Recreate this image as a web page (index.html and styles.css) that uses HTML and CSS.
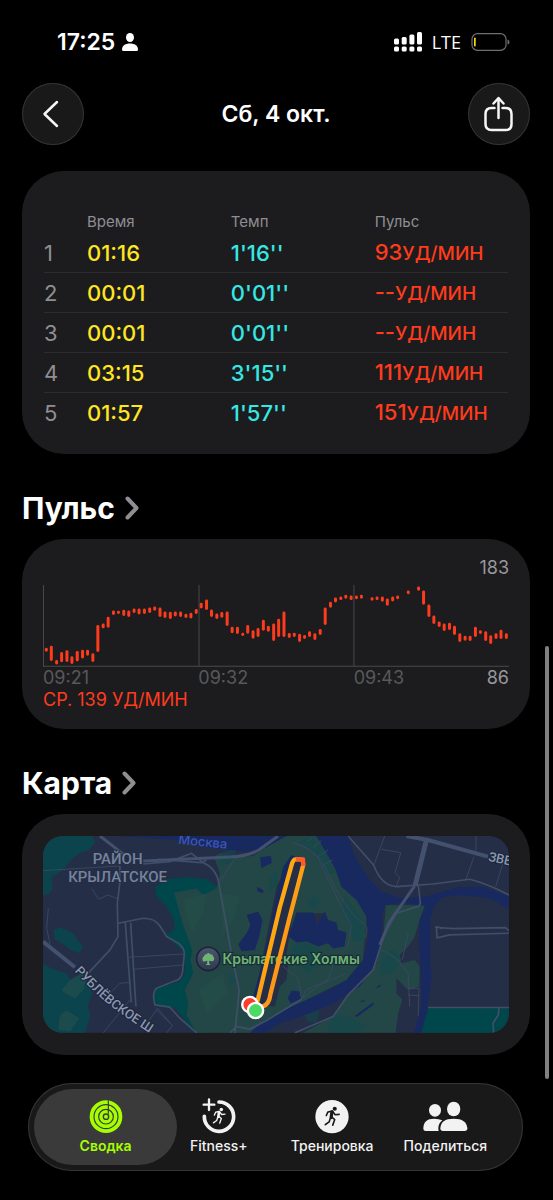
FILE: index.html
```html
<!DOCTYPE html>
<html lang="ru">
<head>
<meta charset="utf-8">
<meta name="viewport" content="width=device-width, initial-scale=1">
<title>Сб, 4 окт.</title>
<link rel="stylesheet" href="styles.css">
</head>
<body>
<svg class="defs" aria-hidden="true">
  <symbol id="runner" viewBox="0 0 40 50">
    <circle cx="26" cy="6" r="5.2" fill="currentColor"/>
    <path d="M19 14 17 28" stroke="currentColor" stroke-width="8" stroke-linecap="round" fill="none"/>
    <path d="M20 12 9 14 5 23M21 13 27 21 37 20M19 27 26 33 21 47M15 30 12 39 2 46" stroke="currentColor" stroke-width="4" stroke-linecap="round" stroke-linejoin="round" fill="none"/>
  </symbol>
</svg>
<div class="screen">
  <div class="status">
    <div class="status-side">
      <span class="clock">17:25</span>
      <svg class="person" viewBox="0 0 16 18"><ellipse cx="8" cy="4.5" rx="4" ry="4.5"/><path d="M0 16.5C0 12.500 3.500 10.500 8 10.500S16 12.500 16 16.500Q16 18 14.500 18H1.500Q0 18 0 16.500Z"/></svg>
    </div>
    <div class="status-side">
      <svg class="signal" viewBox="0 0 28 20"><rect x="0" y="6.500" width="5" height="6" rx="1.500"/><rect x="7.700" y="5" width="5" height="7.500" rx="1.500"/><rect x="15.400" y="2.500" width="5" height="10" rx="1.500"/><rect x="23" y="0" width="5" height="12.500" rx="1.500"/><rect x="0" y="14.500" width="5" height="5" rx="1.500"/><rect x="7.700" y="14.500" width="5" height="5" rx="1.500"/><rect x="15.400" y="14.500" width="5" height="5" rx="1.500"/><rect x="23" y="14.500" width="5" height="5" rx="1.500"/></svg>
      <span class="network">LTE</span>
      <svg class="battery" viewBox="0 0 39 18"><rect x="1" y=".6" width="34" height="16.800" rx="5.500" fill="none" stroke="#6f6f72" stroke-width="1.200"/><rect x="3" y="4.500" width="1.700" height="9" rx=".8" fill="#ffd60a"/><path d="M36.500 6.500Q38.500 7 38.500 9T36.500 11.500Z" fill="#6f6f72"/></svg>
    </div>
  </div>

  <header class="topbar">
    <button class="round" type="button" aria-label="Назад"><svg viewBox="0 0 62 62"><path d="M35 19 22.500 31 35 43"/></svg></button>
    <h1>Сб, 4 окт.</h1>
    <button class="round" type="button" aria-label="Поделиться тренировкой"><svg viewBox="0 0 62 62"><path d="M26.500 25H23.500Q17.500 25 17.500 31V41Q17.500 47 23.500 47H37.500Q43.500 47 43.500 41V31Q43.500 25 37.500 25H34.500M30.500 35V15.500M25.500 20.500 30.500 15 35.500 20.500"/></svg></button>
  </header>

  <main>
    <section class="card splits">
      <table>
        <thead><tr><td></td><th scope="col">Время</th><th scope="col">Темп</th><th scope="col">Пульс</th></tr></thead>
        <tbody>
          <tr><td>1</td><td class="time">01:16</td><td class="pace">1'16''</td><td class="pulse">93<span class="unit">УД/МИН</span></td></tr>
          <tr><td>2</td><td class="time">00:01</td><td class="pace">0'01''</td><td class="pulse">--<span class="unit">УД/МИН</span></td></tr>
          <tr><td>3</td><td class="time">00:01</td><td class="pace">0'01''</td><td class="pulse">--<span class="unit">УД/МИН</span></td></tr>
          <tr><td>4</td><td class="time">03:15</td><td class="pace">3'15''</td><td class="pulse">111<span class="unit">УД/МИН</span></td></tr>
          <tr><td>5</td><td class="time">01:57</td><td class="pace">1'57''</td><td class="pulse">151<span class="unit">УД/МИН</span></td></tr>
        </tbody>
      </table>
    </section>

    <h2><a href="#pulse">Пульс <svg viewBox="0 0 14 24"><path d="M2.500 2.500 11.500 12 2.500 21.500"/></svg></a></h2>
    <section class="card heart" id="pulse">
      <div class="max">183</div>
      <svg class="chart" viewBox="66 315 1402 247" role="img" aria-label="График пульса">
        <path d="M67.500 315V560M535.500 315V560M1001.500 315V560M66 559.500H1468" fill="none" stroke="#48484a" stroke-width="3"/>
        <path class="bars" d="M76 508V511M91 502V539M107 545V550M122 521V543M138 516V542M153 534V548M169 518V541M185 514V532M200 514V523M216 525V542M231 440V512M247 435V441M262 415V439M278 396V401M293 397V398M309 394V404M324 396V407M340 390V395M355 390V399M371 390V398M387 387V395M402 384V388M418 387V407M433 399V410M449 400V413M464 399V405M480 399V407M496 406V410M511 403V411M527 392V398M542 373V381M558 363V386M573 393V407M589 405V413M604 401V409M620 399V434M635 445V456M651 445V458M667 463V464M682 440V457M698 456V472M713 449V467M729 424V448M744 442V451M760 435V479M775 421V467M791 399V467M807 464V470M822 463V467M838 466V482M853 470V473M868 459V467M884 465V476M900 452V461M915 387V431M931 370V379M946 357V363M962 354V356M977 349V352M993 351V356M1009 351V353M1024 349V352M1056 356V358M1071 354V356M1087 354V361M1102 360V373M1118 354V360M1133 351V353M1165 336V338M1196 324V328M1211 336V370M1227 378V407M1242 411V428M1258 429V437M1273 435V449M1289 433V446M1304 442V461M1320 465V482M1336 472V478M1351 472V479M1367 445V467M1382 456V458M1398 459V479M1413 471V488M1429 465V473M1444 454V473M1460 465V473"/>
      </svg>
      <div class="axis"><span>09:21</span><span>09:32</span><span>09:43</span><b>86</b></div>
      <div class="average">СР. 139 УД/МИН</div>
    </section>

    <h2><a href="#map">Карта <svg viewBox="0 0 14 24"><path d="M2.500 2.500 11.500 12 2.500 21.500"/></svg></a></h2>
    <section class="card route" id="map">
      <svg class="map" viewBox="69 228 1399 591" role="img" aria-label="Карта маршрута">
        <defs>
          <linearGradient id="track" gradientUnits="userSpaceOnUse" x1="780" y1="440" x2="860" y2="465"><stop offset="0" stop-color="#ffa90e"/><stop offset="1" stop-color="#ff8a1c"/></linearGradient>
          <linearGradient id="pin" x1="0" y1="0" x2="0" y2="1"><stop offset="0" stop-color="#4c5670"/><stop offset="1" stop-color="#2f3850"/></linearGradient>
          <path id="highway" d="M163 634Q235 712 290 752T450 858"/>
        </defs>
        <rect x="69" y="228" width="1399" height="591" fill="#242e47"/>
        <g fill="#0c444d">
          <path d="M69 228H215L226 248 205 270 175 282 150 302 128 332 95 350 97 392 82 404 69 405Z"/>
          <path d="M100 510 120 502 160 520 176 545 190 558 178 580 148 568 128 550 105 540Z"/>
          <path d="M69 612 100 628 140 640 150 660 200 668 217 700 203 740 212 765 195 819H69Z"/>
        </g>
        <path fill="#1b4b4c" d="M125 690 150 660 185 640 200 655 190 690 165 715 135 700ZM120 765 140 752 178 775 150 815 115 810Z"/>
        <path fill="#00474c" d="M405 382 440 358 500 352 560 358 600 385 680 450 560 819H527L465 745 412 740 398 706 410 684 480 665 495 640 495 580 437 524 465 508 460 475 440 440 410 410Z"/>
        <path fill="#234746" d="M462 398 530 386 550 405 590 385 600 340 582 290 600 280 640 292 700 288 770 240 800 228H890L930 290 965 370 1015 420 1040 470 1048 530 1030 600 980 660 900 700 810 745 730 785 695 819H530L500 765 505 730 495 690 520 640 512 600 517 570 488 490Z"/>
        <path fill="#234746" d="M1098 436H1215L1200 480 1185 530 1165 560 1140 585 1145 610 1185 600 1200 620 1198 680 1165 690 1130 655 1130 700 1148 720 1135 760 1128 819H850L940 770 985 700 1060 630 1090 540Z"/>
        <path fill="#00474c" d="M1225 745H1468V819H1205Z"/>
        <path fill="#13494d" opacity=".6" d="M600 280 650 265 640 305 600 320ZM830 248 870 230 910 260 945 335 920 345 880 280ZM975 410 1040 490 1042 540 1000 545 990 500 965 450ZM815 560 850 545 900 565 905 610 865 640 840 615 815 600ZM1085 580 1125 570 1145 600 1120 640 1082 645ZM880 405 900 420 885 450 860 435ZM940 765 990 770 1040 800 1020 819H920ZM850 760 900 750 890 790 865 785ZM620 640 650 660 630 680ZM750 350 770 330 775 370 745 400Z"/>
        <path fill="#24504a" opacity=".5" d="M490 420 560 400 550 460 515 520 500 470ZM600 400 660 410 640 480 610 520ZM535 690 610 640 620 700 560 760Z"/>
        <path fill="#242e47" d="M770 380 795 330 840 290 860 300 830 400 810 520 790 640 765 740 700 735ZM1045 430 1098 436 1090 500 1075 560 1040 620 1030 590ZM770 640 805 610 800 660 770 690ZM870 460 920 460 910 500 880 490ZM1140 760 1165 765 1150 819H1130Z"/>
        <g fill="#182960">
          <path d="M300 228 L470 240 560 262 680 275 740 262 800 228Z"/>
          <path d="M890 228H985L1005 290 1050 360 1085 395 1140 415 1220 410 1310 382 1390 380 1468 410V447L1410 415 1330 405 1270 412 1242 440 1232 480 1231 600 1236 650 1220 760 1205 819H1183L1205 740 1205 660 1199 560 1200 480 1218 438 1150 428 1095 435 1087 470 1085 540 1070 610 1020 680 940 732 860 764 780 790 735 819H690L730 785 810 742 900 703 980 662 1030 600 1046 530 1040 470 1010 420 965 380 948 330 920 280Z"/>
          <path d="M830 458 880 458 892 495 915 455 925 480 950 488 955 510 980 518 974 560 940 566 925 550 895 560 860 545 830 548 806 530Z"/>
          <path d="M680 465 715 455 728 480 718 530 705 570 665 574 655 553 680 520 692 495Z"/>
          <path d="M720 292 753 288 756 308 725 325ZM712 380 732 392 728 400 712 394ZM750 290 756 298 750 305ZM804 715 815 692 840 695 845 718 812 730ZM1005 768 1060 728 1062 735 1010 772ZM1016 728 1035 718 1033 724ZM1066 685 1084 673 1080 682Z"/>
          <path d="M790 320 815 285 828 290 800 390 745 620 715 725 698 718 740 560Z"/>
        </g>
        <g fill="none" stroke="#3a465f" stroke-width="3" stroke-linejoin="round">
          <path d="M69 332 300 318M215 386 236 418 264 405 294 417M85 445 80 505 90 552M327 592 494 582M342 628 492 615M295 490 316 487M270 700 300 670 330 668M250 819 330 720M385 785 413 745 458 798 440 819M410 750 450 790M600 365 645 295 690 285"/>
          <path d="M1095 228 1062 316M1085 268 1143 278 1126 338 1140 352 1130 378M1369 228V272M1363 290 1339 358M1450 310 1428 380M820 248Q880 260 905 315T960 430 995 500L985 560M840 255Q900 280 920 330T975 430 1030 490 1035 535M790 620 835 655 845 718 900 675 980 640M845 718 860 690 925 660 945 600 985 560M1085 570 1130 595 1165 640 1170 740M1165 520 1148 600M1165 685 1198 685 1195 770M1165 705 1198 708"/>
          <path d="M862 244 878 232M880 262 905 242M895 290 925 270M910 315 938 300"/>
        </g>
        <g fill="none" stroke="#414e68" stroke-width="5" stroke-linejoin="round">
          <path d="M300 318 299 375 292 430 294 530 270 570 200 645M316 488 334 728M332 488 348 740M295 490 370 475Q405 475 420 498T440 530L475 550Q495 565 493 585L488 635Q485 660 460 665L410 685Q395 700 405 735L450 742 480 775 530 819"/>
          <path d="M370 312 450 305 515 280 550 308Q590 325 597 370L636 588 658 690 645 819M415 298 545 308 560 300M630 819 650 800 690 808 740 782 845 718M825 819 940 770 985 705 1060 630 1095 520 1130 460 1198 438 1202 430 1196 378M985 228 1062 316Q1085 378 1130 380L1240 372 1350 358Q1400 370 1468 405"/>
          <path d="M1250 500 1252 534 1290 525 1468 520M1246 502 1300 506 1458 503 1468 513M1250 500 1268 506M1225 743H1468M1438 743 1436 765 1420 790 1422 819"/>
        </g>
        <g fill="none" stroke="#43516e" stroke-linejoin="round">
          <path stroke-width="9" d="M240 228 315 286M370 303 550 295 630 291Q690 288 720 268L775 228M1080 555 1110 485 1185 378"/>
          <path stroke-width="12" d="M69 545 165 622M1160 228 1225 240 1405 290"/>
          <path stroke-width="15" d="M1220 240 1186 378"/>
        </g>
        <g class="map-area" text-anchor="middle"><text x="293" y="313">РАЙОН</text><text x="293" y="366">КРЫЛАТСКОЕ</text></g>
        <text class="map-river" transform="translate(474 251) rotate(6)">Москва</text>
        <text class="map-road"><textPath href="#highway">РУБЛЁВСКОЕ Ш</textPath></text>
        <text class="map-road" transform="translate(1404 302) rotate(12)">ЗВЕ</text>
        <circle cx="565" cy="597" r="35" fill="url(#pin)" stroke="#1b2338" stroke-width="5"/>
        <path d="M549 604Q545 594 552 590 553 582 560 583 565 576 571 583 579 582 580 590 586 596 580 603 575 606 568 602V611L572 615H558L562 611V602Q555 607 549 604Z" fill="#6fb472"/>
        <text class="map-park" x="608" y="611">Крылатские Холмы</text>
        <path d="M712 728 780 442 815 316Q820 298 826 298H842Q850 298 850 310V316L810 470 752 702Q748 735 728 740" fill="none" stroke="url(#track)" stroke-width="13" stroke-linejoin="round"/>
        <path d="M828 298H850V318" fill="none" stroke="#ff5a2a" stroke-width="13" stroke-linejoin="round"/>
        <g stroke="#fff" stroke-width="7"><circle cx="690" cy="734" r="23" fill="#ff3b30"/><circle cx="707" cy="752" r="23" fill="#4cd964"/></g>
      </svg>
    </section>
  </main>

  <nav class="tabs">
    <button class="tab active" type="button" aria-current="page">
      <svg viewBox="0 0 150 105"><circle cx="75" cy="53" r="49" fill="#a5ff00"/><g fill="none" stroke="#3a3a3a" stroke-width="3.500"><circle cx="75" cy="53" r="36"/><circle cx="75" cy="53" r="22"/><circle cx="75" cy="53" r="8" stroke-width="4"/><path d="M82 4V44"/></g></svg>
      <span>Сводка</span>
    </button>
    <button class="tab" type="button">
      <svg viewBox="0 0 150 105"><path d="M75 9A44 44 0 1 1 31 52" fill="none" stroke="#f2f2f2" stroke-width="11" stroke-linecap="round"/><path d="M45 1V33M29 17H61" stroke="#f2f2f2" stroke-width="7" stroke-linecap="round"/><use href="#runner" x="56" y="25" width="40" height="51"/></svg>
      <span>Fitness+</span>
    </button>
    <button class="tab" type="button">
      <svg viewBox="0 0 150 105"><circle cx="75" cy="53" r="50" fill="#f2f2f2"/><use class="dark" href="#runner" x="52" y="22" width="48" height="60"/></svg>
      <span>Тренировка</span>
    </button>
    <button class="tab" type="button">
      <svg viewBox="0 0 150 105"><g fill="#f2f2f2"><ellipse cx="45" cy="34" rx="18" ry="19"/><path d="M10 88Q10 59 43 59 56 59 67 64 55 73 55 88 55 93 56 96H17Q10 96 10 88Z"/><ellipse cx="101" cy="30" rx="20" ry="22"/><path d="M61 88Q62 59 101 59T142 88Q142 96 134 96H69Q61 96 61 88Z"/></g></svg>
      <span>Поделиться</span>
    </button>
  </nav>
  <div class="scrollbar"></div>
</div>
</body>
</html>
```
FILE: styles.css
```css
* { box-sizing: border-box; }
body {
  margin: 0;
  background: #000;
  color: #fff;
  font-family: Inter, "Liberation Sans", sans-serif;
}
button { font: inherit; color: inherit; border: 0; padding: 0; cursor: pointer; }
.defs { display: block; width: 0; height: 0; }
.screen { position: relative; min-height: 100vh; padding: 0 23px 30px 22px; }

.status {
  display: flex;
  justify-content: space-between;
  align-items: center;
  height: 83px;
  padding: 0 20px 0 35px;
}
.status-side { display: flex; align-items: center; gap: 10px; }
.status-side:first-child { gap: 7px; }
.clock { font-size: 23px; font-weight: 600; }
.network { font-family: "Open Sans", sans-serif; font-size: 18px; font-weight: 500; }
.person { width: 16px; height: 18px; fill: #fff; }
.signal { width: 28px; height: 20px; fill: #fff; }
.battery { width: 39px; height: 18px; }

.topbar { display: flex; align-items: center; justify-content: space-between; margin-bottom: 26px; }
h1 { margin: 0; font-size: 23px; font-weight: 600; }
.round {
  width: 62px;
  height: 62px;
  border-radius: 50%;
  background: #191919;
  box-shadow: inset 0 0 0 1px #343434;
}
.round svg { display: block; width: 62px; height: 62px; fill: none; stroke: #f5f5f5; stroke-width: 2.5; stroke-linecap: round; stroke-linejoin: round; }

.card { background: #1c1c1e; border-radius: 42px; padding: 22px; }

.splits { padding-top: 41px; }
table { width: 100%; table-layout: fixed; border-collapse: collapse; color: #8e8e93; font-size: 22px; }
td, th { height: 40px; padding: 2px 0 0; text-align: left; font-weight: 400; line-height: 24px; }
td:first-child { width: 43px; }
td:nth-child(2), th:nth-child(2), td:nth-child(3), th:nth-child(3) { width: 31%; }
thead td, thead th { height: 20px; padding: 0; font-size: 15px; line-height: 20px; }
tbody tr + tr { border-top: 1px solid #2d2d30; }
.time, .pace, .pulse { font-weight: 500; }
.time { color: #ffe620; }
.pace { color: #35e8e4; }
.pulse { color: #ff3b1d; }
.unit { font-size: 19px; }

h2 { margin: 35px 0 12px; font-size: 30px; line-height: 38px; font-weight: 700; }
h2 a { display: inline-flex; align-items: center; gap: 10px; color: inherit; text-decoration: none; }
h2 svg { width: 14px; height: 24px; fill: none; stroke: #8e8e93; stroke-width: 4; stroke-linecap: round; stroke-linejoin: round; }

.heart { padding: 18px 21px; font-size: 18px; line-height: 22px; }
.max { text-align: right; color: #98989d; margin-bottom: 6px; }
.chart { display: block; width: 100%; }
.bars { fill: none; stroke: #ff3b1d; stroke-width: 9; stroke-linecap: round; }
.axis { display: grid; grid-template-columns: 1fr 1fr 1fr; position: relative; color: #58585b; }
.axis b { position: absolute; right: 0; color: #98989d; font-weight: 400; }
.average { color: #ff3b1d; }

.route { padding: 22px 21px; }
.map { display: block; width: 100%; border-radius: 20px; }
.map-area { font: 500 45px Roboto, sans-serif; fill: #75839b; stroke: #242e47; stroke-width: 5px; paint-order: stroke; }
.map-river { font: 500 39px Inter, sans-serif; fill: #3c55b8; }
.map-road { font: 500 39px Roboto, sans-serif; fill: #8a97af; stroke: #1c253b; stroke-width: 6px; paint-order: stroke; }
.map-park { font: 600 42px Inter, sans-serif; fill: #6fb472; stroke: #182b38; stroke-width: 7px; paint-order: stroke; }

.tabs {
  display: grid;
  grid-template-columns: repeat(4, 1fr);
  margin: 28px 7px 0 6px;
  padding: 6px 21px;
  border-radius: 44px;
  background: #191919;
  box-shadow: inset 0 0 0 1px #343434;
}
.tab { position: relative; display: flex; flex-direction: column; align-items: center; height: 76px; padding-top: 10px; gap: 4px; background: none; font-size: 14px; line-height: 16px; font-weight: 500; color: #f2f2f2; z-index: 0; }
.tab svg { width: 50px; height: 35px; overflow: visible; }
.tab .dark { color: #191919; }
.active { color: #a5ff00; font-weight: 600; }
.active::before { content: ""; position: absolute; z-index: -1; inset: 0 -15px; border-radius: 38px; background: #3a3a3a; }

.scrollbar { position: absolute; right: 4px; top: 646px; width: 4px; height: 433px; border-radius: 2px; background: #808080; }
```
